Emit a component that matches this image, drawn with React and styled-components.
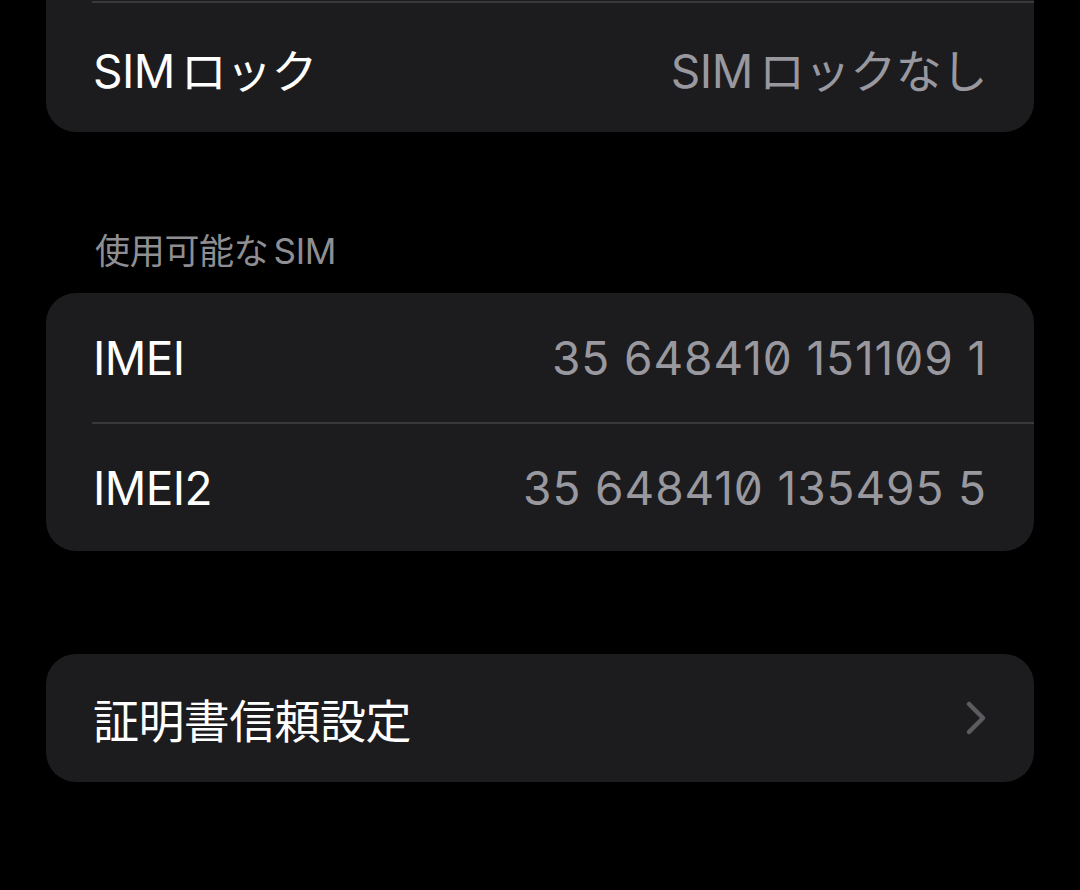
import React from "react";
import styled, { createGlobalStyle } from "styled-components";

const GlobalStyle = createGlobalStyle`
  html, body {
    margin: 0;
    padding: 0;
    background: #000;
  }
  body {
    font-family: Inter, "Noto Sans CJK JP", sans-serif;
    -webkit-font-smoothing: antialiased;
  }
`;

const Page = styled.div`
  width: 1080px;
  min-height: 890px;
  background: #000;
  display: flex;
  flex-direction: column;
  padding: 0 46px;
  box-sizing: border-box;
`;

const Card = styled.div`
  background: #1c1c1e;
  border-radius: ${(p) => (p.$continued ? "0 0 30px 30px" : "30px")};
  overflow: hidden;
  display: flex;
  flex-direction: column;
  padding-top: ${(p) => (p.$continued ? "1px" : "0")};
  margin-top: ${(p) => p.$gap || 0}px;
`;

const Separator = styled.div`
  height: 2px;
  margin-left: 46px;
  background: #38383b;
`;

const Row = styled.div`
  height: ${(p) => p.$h || 129}px;
  display: flex;
  align-items: center;
  justify-content: space-between;
  padding: 0 ${(p) => p.$pr || 47}px 0 47px;
  box-sizing: border-box;
`;

const Label = styled.span`
  color: #ffffff;
  font-size: 46px;
  letter-spacing: -0.6px;
  white-space: nowrap;
`;

const Value = styled.span`
  color: #98989e;
  font-size: 46px;
  letter-spacing: ${(p) => (p.$digits ? "0.9px" : "-0.4px")};
  font-feature-settings: "zero" 1;
  white-space: nowrap;
`;

/* Latin run followed by kana: iOS leaves a small gap between scripts */
const Latin = styled.span`
  margin-right: ${(p) => p.$gap ?? 6}px;
  margin-left: ${(p) => p.$lead || 0}px;
`;

const SectionHeader = styled.div`
  height: 161px;
  display: flex;
  align-items: flex-end;
  padding: 0 49px 24px;
  box-sizing: border-box;
  color: #8e8e93;
  font-size: 35px;
  line-height: 36px;
  letter-spacing: -0.3px;
`;

const Chevron = () => (
  <svg width="24" height="36" viewBox="0 0 24 36" fill="none">
    <path
      d="M5 4 L19 18 L5 32"
      stroke="#5b5b60"
      strokeWidth="4.5"
      strokeLinecap="round"
      strokeLinejoin="round"
    />
  </svg>
);

export default function App() {
  return (
    <>
      <GlobalStyle />
      <Page>
        <Card $continued>
          <Separator />
          <Row>
            <Label>
              <Latin>SIM</Latin>ロック
            </Label>
            <Value>
              <Latin>SIM</Latin>ロックなし
            </Value>
          </Row>
        </Card>

        <SectionHeader>
          使用可能な<Latin $gap={0} $lead={5}>SIM</Latin>
        </SectionHeader>

        <Card>
          <Row>
            <Label>IMEI</Label>
            <Value $digits>35 648410 151109 1</Value>
          </Row>
          <Separator />
          <Row $h={127}>
            <Label>IMEI2</Label>
            <Value $digits>35 648410 135495 5</Value>
          </Row>
        </Card>

        <Card $gap={103}>
          <Row $h={128} $pr={46}>
            <Label>証明書信頼設定</Label>
            <Chevron />
          </Row>
        </Card>
      </Page>
    </>
  );
}
